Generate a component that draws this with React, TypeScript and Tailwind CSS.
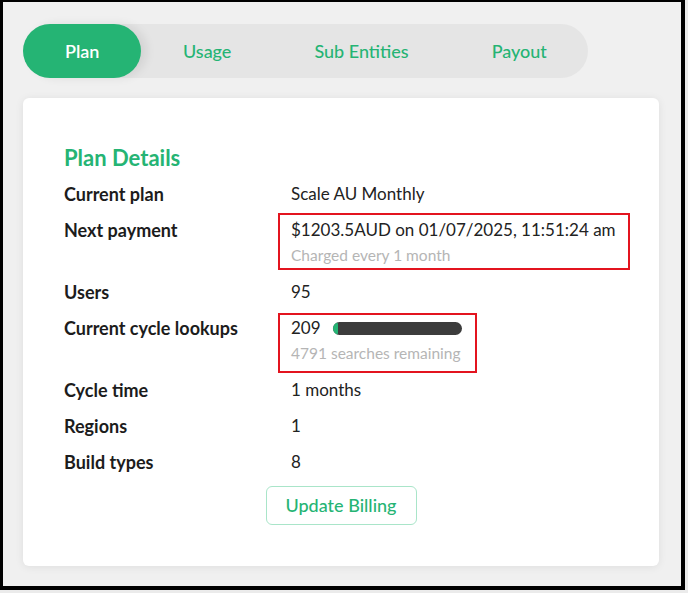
import React from 'react'

const tabs = ['Plan', 'Usage', 'Sub Entities', 'Payout']

function Row({ label, children }: { label: string; children: React.ReactNode }) {
  return (
    <div className="flex">
      <div className="w-[227px] shrink-0 text-[18px] font-bold text-[#1c1c1c] leading-9">{label}</div>
      <div className="relative flex-1">{children}</div>
    </div>
  )
}

export default function App() {
  const used = 209
  const total = 5000

  return (
    <div className="w-[688px] h-[593px] bg-[#ebebeb] font-['Lato',sans-serif] text-[17px]">
      <div className="w-[685px] h-[590px] border-l-[3px] border-t-2 border-r-[4px] border-b-[4px] border-black bg-[#f0f0f0] pl-[20px] pt-[22px]">
        {/* Tabs */}
        <div className="inline-flex h-[54px] rounded-full bg-[#e5e5e5] text-[18px]">
          {tabs.map((t, i) => (
            <button
              key={t}
              className={
                i === 0
                  ? 'px-[42px] rounded-full bg-[#25b474] text-white font-semibold shadow-[6px_0_10px_rgba(0,0,0,0.08)]'
                  : 'px-[41.5px] rounded-full text-[#25b474] font-medium'
              }
            >
              {t}
            </button>
          ))}
        </div>

        {/* Card */}
        <div className="mt-[20px] w-[636px] rounded-md bg-white shadow-[0_1px_8px_rgba(0,0,0,0.08)] pl-[41px] pr-6 pt-[42px] pb-[41px]">
          <h2 className="text-[22px] font-bold text-[#25b474] leading-9">Plan Details</h2>

          <Row label="Current plan">
            <div className="leading-9 text-[#222]">Scale AU Monthly</div>
          </Row>

          <Row label="Next payment">
            <div className="leading-9 text-[#222]">$1203.5AUD on 01/07/2025, 11:51:24 am</div>
            <div className="-mt-[3px] mb-[9px] leading-5 text-[15.5px] text-[#b5b5b5]">Charged every 1 month</div>
            <div className="absolute -left-[13px] top-px w-[352px] h-[57px] border-2 border-[#e3141f]" />
          </Row>

          <Row label="Users">
            <div className="leading-9 text-[#222]">95</div>
          </Row>

          <Row label="Current cycle lookups">
            <div className="flex items-center gap-[12px] leading-9 text-[#222]">
              209
              <div className="w-[129px] h-[13px] rounded-full bg-[#3c3c3c] overflow-hidden">
                <div className="h-full rounded-full bg-[#25b474]" style={{ width: `${Math.max((used / total) * 100, 4)}%` }} />
              </div>
            </div>
            <div className="-mt-[3px] mb-[9px] leading-5 text-[15.5px] text-[#b5b5b5]">4791 searches remaining</div>
            <div className="absolute -left-[13px] top-[3px] w-[199px] h-[60px] border-2 border-[#e3141f]" />
          </Row>

          <Row label="Cycle time">
            <div className="leading-9 text-[#222]">1 months</div>
          </Row>

          <Row label="Regions">
            <div className="leading-9 text-[#222]">1</div>
          </Row>

          <Row label="Build types">
            <div className="leading-9 text-[#222]">8</div>
          </Row>

          <div className="mt-[6px] flex justify-center pr-[17px]">
            <button className="h-[39px] w-[151px] rounded-md border border-[#a9e5c9] text-[18px] text-[#25b474] font-medium">
              Update Billing
            </button>
          </div>
        </div>
      </div>
    </div>
  )
}
